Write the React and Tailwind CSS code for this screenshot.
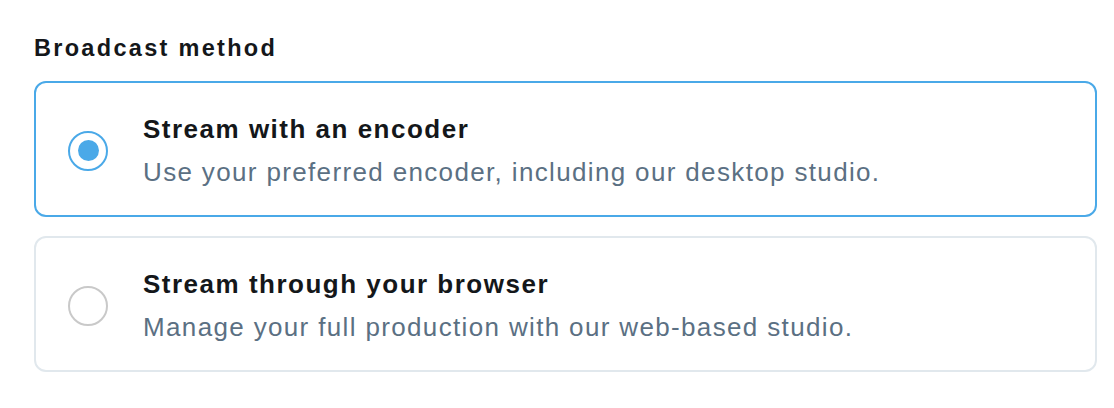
import { useState } from 'react'

const options = [
  {
    id: 'encoder',
    title: 'Stream with an encoder',
    desc: 'Use your preferred encoder, including our desktop studio.',
  },
  {
    id: 'browser',
    title: 'Stream through your browser',
    desc: 'Manage your full production with our web-based studio.',
  },
]

function Radio({ checked }) {
  return (
    <span
      className={
        checked
          ? 'w-10 h-10 shrink-0 rounded-full border-2 border-[#4aa9e8] grid place-items-center'
          : 'w-10 h-10 shrink-0 rounded-full border-2 border-[#c9c9c9]'
      }
    >
      {checked && <span className="w-[21px] h-[21px] rounded-full bg-[#4aa9e8]" />}
    </span>
  )
}

export default function App() {
  const [method, setMethod] = useState('encoder')

  return (
    <div className="bg-white min-h-[408px] pt-[34px] pl-[34px] pr-[17px] font-['Liberation_Sans',Arial,sans-serif]">
      <h2 className="text-[23.5px] leading-[28px] tracking-[2.3px] font-bold text-[#14171a]">Broadcast method</h2>
      <div className="mt-[19px] flex flex-col gap-[19px]">
        {options.map((o) => {
          const checked = method === o.id
          return (
            <button
              key={o.id}
              type="button"
              onClick={() => setMethod(o.id)}
              className={
                checked
                  ? 'flex items-center text-left rounded-xl border-2 border-[#4aa9e8] pl-8 pt-[30px] pb-[27px]'
                  : 'flex items-center text-left rounded-xl border-2 border-[#e1e8ed] pl-8 pt-[30px] pb-[27px]'
              }
            >
              <Radio checked={checked} />
              <div className="ml-[35px]">
                <div className="text-[26px] leading-[32px] tracking-[1.5px] font-bold text-[#14171a]">{o.title}</div>
                <div className="mt-[11px] text-[26px] leading-[32px] tracking-[1.35px] text-[#5b7083]">{o.desc}</div>
              </div>
            </button>
          )
        })}
      </div>
    </div>
  )
}
